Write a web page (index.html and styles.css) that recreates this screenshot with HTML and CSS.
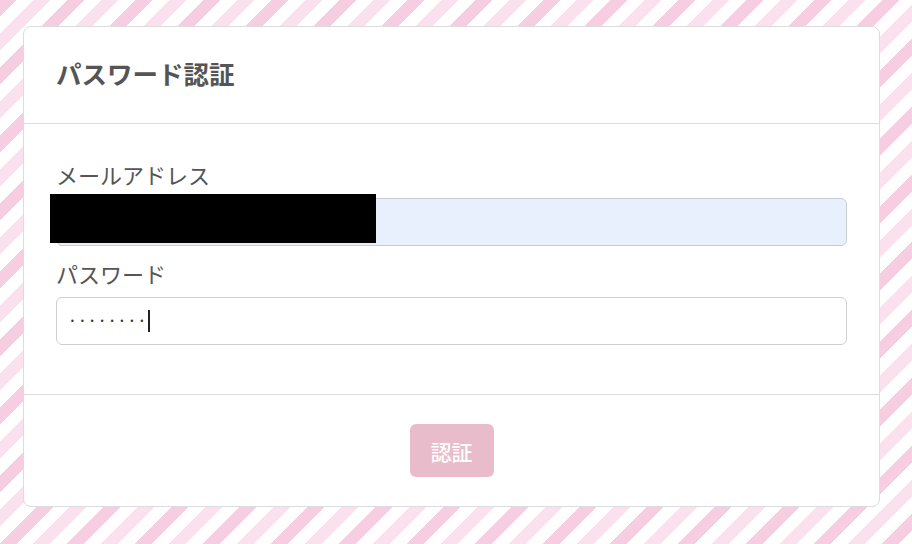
FILE: index.html
```html
<!DOCTYPE html>
<html lang="ja">
<head>
<meta charset="utf-8">
<title>パスワード認証</title>
<link rel="stylesheet" href="styles.css">
</head>
<body>
<div class="card">
  <div class="card-header">
    <h1 class="title">パスワード認証</h1>
  </div>
  <div class="card-body">
    <div class="group">
      <label class="label">メールアドレス</label>
      <div class="field-wrap">
        <div class="input autofill"></div>
        <div class="redact"></div>
      </div>
    </div>
    <div class="group">
      <label class="label">パスワード</label>
      <div class="input"><span class="dots">••••••••</span><span class="caret"></span></div>
    </div>
  </div>
  <div class="card-footer">
    <button class="btn">認証</button>
  </div>
</div>
</body>
</html>
```
FILE: styles.css
```css
html, body {
  margin: 0;
  height: 100%;
}
body {
  font-family: "Noto Sans CJK JP", "Noto Sans", sans-serif;
  background: repeating-linear-gradient(135deg,
    #f7cde2 0px, #f7cde2 12px,
    #ffffff 12px, #ffffff 24px,
    #fbe1ee 24px, #fbe1ee 36px,
    #ffffff 36px, #ffffff 48px);
  padding: 26px 32px 0 23px;
  box-sizing: border-box;
  color: #555;
}
.card {
  background: #fff;
  border: 1px solid #dcdcdc;
  border-radius: 8px;
  height: 481px;
  box-sizing: border-box;
  display: flex;
  flex-direction: column;
}
.card-header {
  height: 97px;
  box-sizing: border-box;
  border-bottom: 1px solid #dcdcdc;
  padding: 0 32px 4px;
  display: flex;
  align-items: center;
}
.title {
  margin: 0;
  font-size: 25.5px;
  font-weight: 700;
  color: #555;
  line-height: 1;
}
.card-body {
  padding: 34px 32px 0 32px;
  height: 271px;
  box-sizing: border-box;
  border-bottom: 1px solid #dcdcdc;
}
.group + .group {
  margin-top: 11px;
}
.label {
  display: block;
  font-size: 22px;
  line-height: 33px;
  margin-bottom: 7px;
  color: #555;
}
.field-wrap {
  position: relative;
}
.input {
  height: 48px;
  box-sizing: border-box;
  border: 1px solid #cfcfcf;
  border-radius: 6px;
  background: #fff;
  display: flex;
  align-items: center;
  padding-left: 13px;
}
.input.autofill {
  background: #e8f0fe;
  border-color: #c8ccd4;
}
.redact {
  position: absolute;
  left: -6px;
  top: -4px;
  width: 326px;
  height: 49px;
  background: #000;
}
.dots {
  font-family: "DejaVu Sans", sans-serif;
  font-size: 8px;
  letter-spacing: 5.2px;
  color: #333;
  line-height: 1;
  padding-top: 2px;
}
.caret {
  display: inline-block;
  width: 2px;
  height: 22px;
  background: #222;
  margin-left: -1px;
}
.card-footer {
  flex: 1;
  display: flex;
  justify-content: center;
  align-items: flex-start;
  padding-top: 29px;
}
.btn {
  font-family: "Noto Sans CJK JP", sans-serif;
  width: 84px;
  height: 53px;
  border: none;
  border-radius: 6px;
  background: #e8bccb;
  color: #fff;
  font-size: 21px;
  font-weight: 500;
  padding: 0;
}
```
